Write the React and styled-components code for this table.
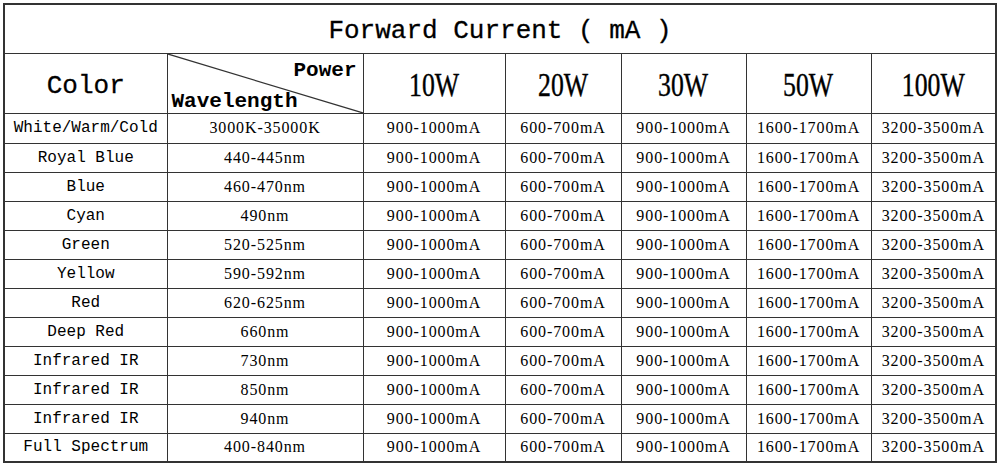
import React from 'react';
import styled, { createGlobalStyle } from 'styled-components';

const GlobalStyle = createGlobalStyle`
  html, body {
    margin: 0;
    padding: 0;
    background: #fff;
  }
`;

const powers = ['10W', '20W', '30W', '50W', '100W'];
const currents = ['900-1000mA', '600-700mA', '900-1000mA', '1600-1700mA', '3200-3500mA'];

const rows = [
  ['White/Warm/Cold', '3000K-35000K'],
  ['Royal Blue', '440-445nm'],
  ['Blue', '460-470nm'],
  ['Cyan', '490nm'],
  ['Green', '520-525nm'],
  ['Yellow', '590-592nm'],
  ['Red', '620-625nm'],
  ['Deep Red', '660nm'],
  ['Infrared IR', '730nm'],
  ['Infrared IR', '850nm'],
  ['Infrared IR', '940nm'],
  ['Full Spectrum', '400-840nm'],
];

const widths = [163, 196, 142, 116, 125, 125, 125];

const App = () => {
  return (
    <>
      <GlobalStyle />
      <Page>
        <Table>
          <colgroup>
            {widths.map((w, i) => (
              <col key={i} style={{ width: w }} />
            ))}
          </colgroup>
          <thead>
            <TitleRow>
              <TitleCell colSpan={7}>Forward Current ( mA )</TitleCell>
            </TitleRow>
            <HeaderRow>
              <ColorHead>Color</ColorHead>
              <DiagonalHead>
                <Diagonal viewBox="0 0 100 100" preserveAspectRatio="none">
                  <line x1="0" y1="0" x2="100" y2="100" stroke="#333" strokeWidth="1.2" vectorEffect="non-scaling-stroke" />
                </Diagonal>
                <PowerLabel>Power</PowerLabel>
                <WaveLabel>Wavelength</WaveLabel>
              </DiagonalHead>
              {powers.map((p) => (
                <PowerHead key={p}>
                  <Narrow>{p}</Narrow>
                </PowerHead>
              ))}
            </HeaderRow>
          </thead>
          <tbody>
            {rows.map(([name, wave], i) => (
              <DataRow key={i} $first={i === 0}>
                <NameCell>{name}</NameCell>
                <NumCell>{wave}</NumCell>
                {currents.map((c, j) => (
                  <NumCell key={j}>{c}</NumCell>
                ))}
              </DataRow>
            ))}
          </tbody>
        </Table>
      </Page>
    </>
  );
};

const Page = styled.div`
  width: 1000px;
  height: 466px;
  box-sizing: border-box;
  padding: 3px 5px 0 3px;
  background: #fff;
  overflow: hidden;
`;

const Table = styled.table`
  width: 992px;
  table-layout: fixed;
  border-collapse: collapse;
  border: 2px solid #333;
  color: #000;

  td, th {
    border: 1px solid #333;
    padding: 0;
    text-align: center;
    vertical-align: middle;
    font-weight: normal;
    overflow: hidden;
    white-space: nowrap;
  }
`;

const TitleRow = styled.tr`
  height: 49px;
`;

const TitleCell = styled.th`
  font-family: "Liberation Mono", monospace;
  font-size: 26px;
  padding-top: 4px !important;
  -webkit-text-stroke: 0.3px #000;
`;

const HeaderRow = styled.tr`
  height: 60px;
`;

const ColorHead = styled.th`
  font-family: "Liberation Mono", monospace;
  font-size: 26px;
  padding-top: 6px !important;
  -webkit-text-stroke: 0.3px #000;
`;

const DiagonalHead = styled.th`
  position: relative;
`;

const Diagonal = styled.svg`
  position: absolute;
  inset: 0;
  width: 100%;
  height: 100%;
`;

const PowerLabel = styled.span`
  position: absolute;
  top: 6px;
  right: 6px;
  font-family: "Liberation Mono", monospace;
  font-size: 21px;
  font-weight: bold;
  line-height: 1;
`;

const WaveLabel = styled.span`
  position: absolute;
  bottom: 1px;
  left: 4px;
  font-family: "Liberation Mono", monospace;
  font-size: 21px;
  font-weight: bold;
  line-height: 1;
`;

const PowerHead = styled.th`
  font-family: "Liberation Serif", serif;
  font-size: 33px;
  padding-top: 4px !important;
  -webkit-text-stroke: 0.4px #000;
`;

const Narrow = styled.span`
  display: inline-block;
  transform: scaleX(0.78);
`;

const DataRow = styled.tr`
  height: ${(p) => (p.$first ? 30 : 29)}px;
`;

const NameCell = styled.td`
  font-family: "Liberation Mono", monospace;
  font-size: 16px;
`;

const NumCell = styled.td`
  font-family: "Liberation Serif", serif;
  font-size: 16px;
  letter-spacing: 0.9px;
`;

export default App;
